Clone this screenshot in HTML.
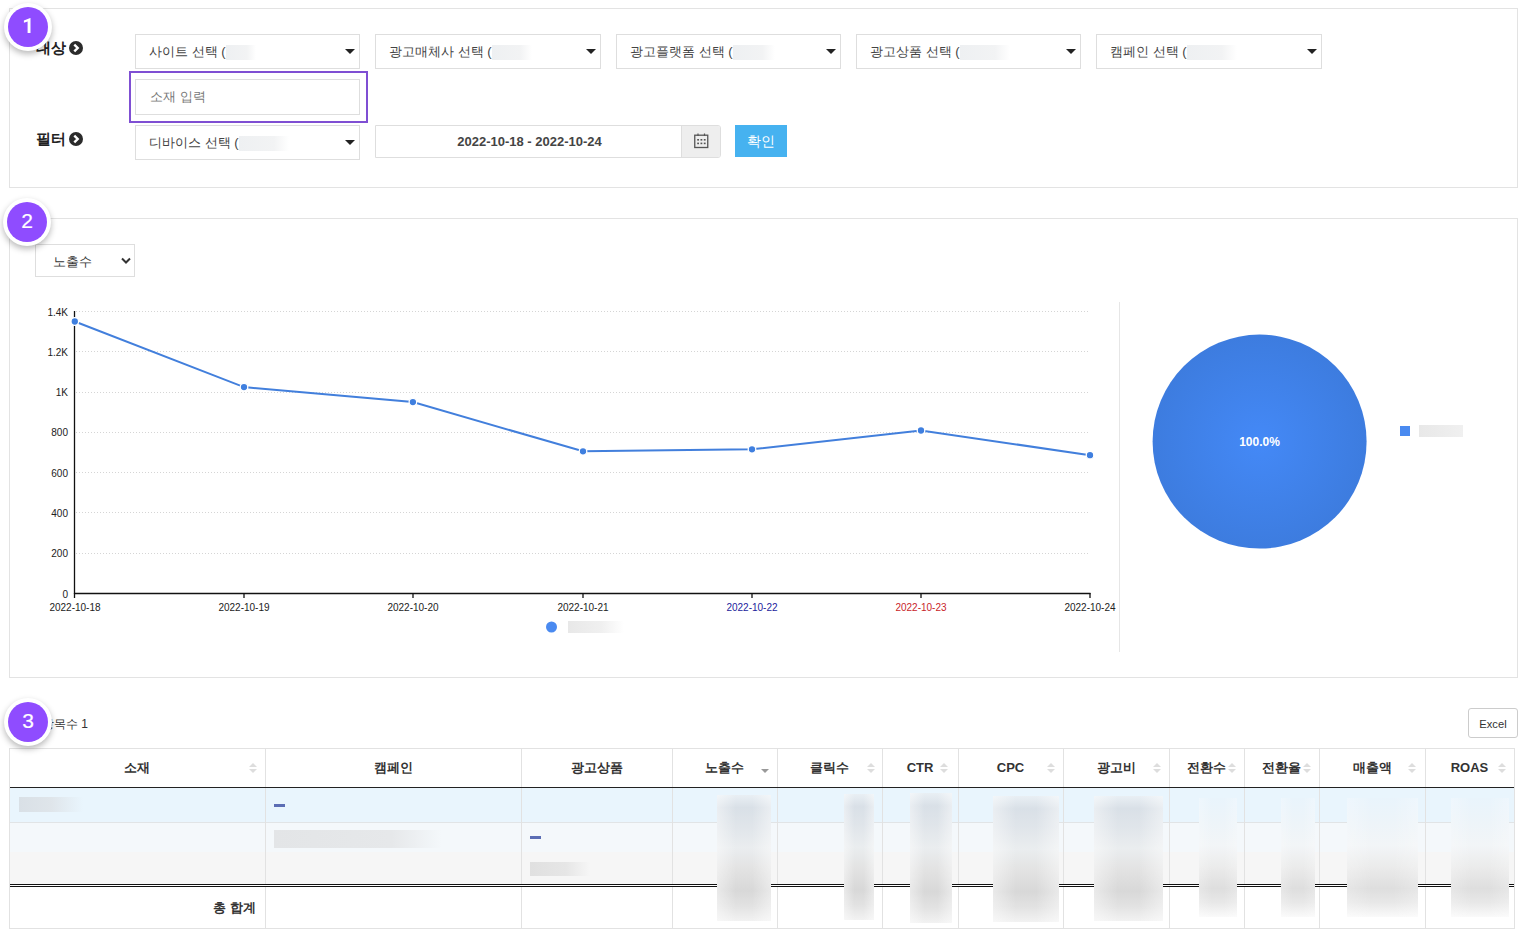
<!DOCTYPE html>
<html lang="ko">
<head>
<meta charset="utf-8">
<style>
*{box-sizing:border-box;margin:0;padding:0}
html,body{width:1523px;height:935px;overflow:hidden;background:#fff}
body{position:relative;font-family:"Liberation Sans",sans-serif;color:#333}
.abs{position:absolute}
.panel{position:absolute;border:1px solid #e3e3e3;background:#fff}
.badge{position:absolute;width:48px;height:48px;border-radius:50%;background:#fff;box-shadow:0 3px 6px rgba(0,0,0,.28);z-index:20}
.badge i{position:absolute;left:4px;top:4px;width:40px;height:40px;border-radius:50%;background:#8f4cff;color:#fff;font-style:normal;font-size:21px;line-height:37px;text-align:center;-webkit-text-stroke:0.2px #fff}
.lbl{position:absolute;font-size:15px;font-weight:bold;color:#222;line-height:16px}
.go{position:absolute;width:14px;height:14px;border-radius:50%;background:#2b2b2b}
.go svg{position:absolute;left:0;top:0}
.sel{position:absolute;height:35px;width:225px;border:1px solid #dedede;background:#fff;font-size:13px;color:#444;line-height:33px;padding-left:13px;white-space:nowrap;overflow:hidden}
.sel .tri{position:absolute;right:4px;top:14px;width:0;height:0;border-left:5px solid transparent;border-right:5px solid transparent;border-top:5px solid #222}
.blur{position:absolute}
.pt{display:inline-block;vertical-align:top;margin-top:10px;height:15px;background:linear-gradient(90deg,#eef0f2,#f2f3f4 70%,#fff)}
.th{position:absolute;top:749px;height:38px;line-height:38px;text-align:center;font-size:13px;font-weight:bold;color:#333;white-space:nowrap}
.sup{position:absolute;width:0;height:0;border-left:4px solid transparent;border-right:4px solid transparent;border-bottom:4px solid #ddd}
.sdn{position:absolute;width:0;height:0;border-left:4px solid transparent;border-right:4px solid transparent;border-top:4px solid #ddd}
.strip{position:absolute}
</style>
</head>
<body>

<!-- ============ PANEL 1 ============ -->
<div class="panel" style="left:9px;top:8px;width:1509px;height:180px"></div>
<div class="badge" style="left:4px;top:3px"><i><svg class="abs" style="left:0;top:0" width="40" height="40" viewBox="0 0 40 40"><path d="M19.6 25.9 L19.6 14.5 L15.9 15.8 L15.9 13.6 L22.2 10.9 L22.5 10.9 L22.5 25.9 Z" fill="#fff"/></svg></i></div>

<div class="lbl" style="left:36px;top:40px">대상</div>
<div class="go" style="left:69px;top:41px"><svg width="14" height="14" viewBox="0 0 14 14"><path d="M5.3 3.6 L8.7 7 L5.3 10.4" fill="none" stroke="#fff" stroke-width="2.4"/></svg></div>
<div class="lbl" style="left:36px;top:131px">필터</div>
<div class="go" style="left:69px;top:132px"><svg width="14" height="14" viewBox="0 0 14 14"><path d="M5.3 3.6 L8.7 7 L5.3 10.4" fill="none" stroke="#fff" stroke-width="2.4"/></svg></div>

<div class="sel" style="left:135px;top:34px">사이트 선택 (<span class="pt" style="width:30px"></span><span class="tri"></span></div>
<div class="sel" style="left:375px;top:34px;width:226px">광고매체사 선택 (<span class="pt" style="width:40px"></span><span class="tri"></span></div>
<div class="sel" style="left:616px;top:34px">광고플랫폼 선택 (<span class="pt" style="width:42px"></span><span class="tri"></span></div>
<div class="sel" style="left:856px;top:34px">광고상품 선택 (<span class="pt" style="width:50px"></span><span class="tri"></span></div>
<div class="sel" style="left:1096px;top:34px;width:226px">캠페인 선택 (<span class="pt" style="width:50px"></span><span class="tri"></span></div>

<div class="abs" style="left:129px;top:71px;width:239px;height:52px;border:2px solid #7f4fd3"></div>
<div class="abs" style="left:135px;top:79px;width:225px;height:36px;border:1px solid #dedede;font-size:13px;color:#777;line-height:34px;padding-left:14px">소재 입력</div>

<div class="sel" style="left:135px;top:125px">디바이스 선택 (<span class="pt" style="width:50px"></span><span class="tri"></span></div>
<div class="abs" style="left:375px;top:125px;width:346px;height:33px;border:1px solid #dedede;border-radius:0 3px 3px 0;overflow:hidden">
  <div class="abs" style="left:0;top:0;width:305px;height:31px;text-align:center;font-size:13px;font-weight:bold;color:#444;line-height:32px;padding-left:2px">2022-10-18 - 2022-10-24</div>
  <div class="abs" style="left:305px;top:0;width:40px;height:31px;background:#eee;border-left:1px solid #dedede"></div>
</div>
<svg class="abs" style="left:694px;top:133px" width="15" height="16" viewBox="0 0 15 16"><rect x="0.75" y="2.2" width="13" height="12.3" fill="none" stroke="#555" stroke-width="1.3"/><line x1="4" y1="0.5" x2="4" y2="3" stroke="#555" stroke-width="1.2"/><line x1="10.5" y1="0.5" x2="10.5" y2="3" stroke="#555" stroke-width="1.2"/><g fill="#555"><rect x="3.2" y="6" width="1.8" height="1.6"/><rect x="6.5" y="6" width="1.8" height="1.6"/><rect x="9.8" y="6" width="1.8" height="1.6"/><rect x="3.2" y="9.6" width="1.8" height="1.6"/><rect x="6.5" y="9.6" width="1.8" height="1.6"/><rect x="9.8" y="9.6" width="1.8" height="1.6"/></g></svg>
<div class="abs" style="left:735px;top:125px;width:52px;height:32px;background:#46b2f0;color:#fff;font-size:14px;text-align:center;line-height:32px">확인</div>

<!-- ============ PANEL 2 ============ -->
<div class="panel" style="left:9px;top:218px;width:1509px;height:460px"></div>
<div class="badge" style="left:3px;top:198px"><i>2</i></div>
<div class="abs" style="left:35px;top:244px;width:100px;height:33px;border:1px solid #dedede;font-size:13px;color:#333;line-height:33px;padding-left:17px">노출수
  <svg class="abs" style="left:85px;top:12px" width="10" height="8" viewBox="0 0 10 8"><path d="M1 1.5 L5 5.5 L9 1.5" fill="none" stroke="#333" stroke-width="2"/></svg>
</div>

<svg class="abs" style="left:0;top:0;z-index:5" width="1523" height="935" viewBox="0 0 1523 935">
  <g stroke="#d5d5d5" stroke-width="1" stroke-dasharray="1,2">
    <line x1="76" y1="311.5" x2="1090" y2="311.5"/>
    <line x1="76" y1="351.5" x2="1090" y2="351.5"/>
    <line x1="76" y1="392.5" x2="1090" y2="392.5"/>
    <line x1="76" y1="432.5" x2="1090" y2="432.5"/>
    <line x1="76" y1="472.5" x2="1090" y2="472.5"/>
    <line x1="76" y1="512.5" x2="1090" y2="512.5"/>
    <line x1="76" y1="553.5" x2="1090" y2="553.5"/>
  </g>
  <g stroke="#111" stroke-width="1.3" fill="none">
    <line x1="74.5" y1="311" x2="74.5" y2="594"/>
    <line x1="74" y1="593.5" x2="1090.5" y2="593.5"/>
    <line x1="74.5" y1="593" x2="74.5" y2="598"/>
    <line x1="244" y1="593" x2="244" y2="598"/>
    <line x1="413" y1="593" x2="413" y2="598"/>
    <line x1="583" y1="593" x2="583" y2="598"/>
    <line x1="752" y1="593" x2="752" y2="598"/>
    <line x1="921" y1="593" x2="921" y2="598"/>
    <line x1="1090" y1="593" x2="1090" y2="598"/>
  </g>
  <g font-family="Liberation Sans, sans-serif" font-size="10" fill="#222" text-anchor="end">
    <text x="68" y="316">1.4K</text>
    <text x="68" y="356">1.2K</text>
    <text x="68" y="396">1K</text>
    <text x="68" y="436">800</text>
    <text x="68" y="477">600</text>
    <text x="68" y="517">400</text>
    <text x="68" y="557">200</text>
    <text x="68" y="598">0</text>
  </g>
  <g font-family="Liberation Sans, sans-serif" font-size="10" fill="#222" text-anchor="middle">
    <text x="75" y="611">2022-10-18</text>
    <text x="244" y="611">2022-10-19</text>
    <text x="413" y="611">2022-10-20</text>
    <text x="583" y="611">2022-10-21</text>
    <text x="752" y="611" fill="#1c1c9c">2022-10-22</text>
    <text x="921" y="611" fill="#c8242a">2022-10-23</text>
    <text x="1090" y="611">2022-10-24</text>
  </g>
  <polyline points="74.8,321.5 244,387.1 412.9,402.1 583,451.3 752,449.3 921,430.5 1090,455.2" fill="none" stroke="#427fdc" stroke-width="2"/>
  <g fill="#3f7fdf" stroke="#fff" stroke-width="1.3">
    <circle cx="74.8" cy="321.5" r="3.8"/>
    <circle cx="244" cy="387.1" r="3.8"/>
    <circle cx="412.9" cy="402.1" r="3.8"/>
    <circle cx="583" cy="451.3" r="3.8"/>
    <circle cx="752" cy="449.3" r="3.8"/>
    <circle cx="921" cy="430.5" r="3.8"/>
    <circle cx="1090" cy="455.2" r="3.8"/>
  </g>
  <circle cx="551.5" cy="627" r="5.5" fill="#4a8af0"/>
  <line x1="1119.5" y1="302" x2="1119.5" y2="652" stroke="#e6e6e6" stroke-width="1"/>
  <defs>
    <radialGradient id="pg" cx="0.5" cy="0.5" r="0.5">
      <stop offset="0" stop-color="#4489f7"/>
      <stop offset="1" stop-color="#3d7cdf"/>
    </radialGradient>
  </defs>
  <circle cx="1259.6" cy="441.6" r="107" fill="url(#pg)"/>
  <text x="1259.5" y="446" font-family="Liberation Sans, sans-serif" font-size="12" font-weight="bold" fill="#fff" text-anchor="middle">100.0%</text>
  <rect x="1400" y="426" width="10" height="10" fill="#4a8af0"/>
</svg>
<div class="blur" style="left:568px;top:621px;width:56px;height:12px;background:linear-gradient(90deg,#e8e8e8,#f0f0f0 60%,#fff)"></div>
<div class="blur" style="left:1419px;top:425px;width:44px;height:12px;background:linear-gradient(90deg,#e8e8e8,#f0f0f0)"></div>

<!-- ============ TABLE ============ -->
<div class="badge" style="left:4px;top:698px"><i>3</i></div>
<div class="abs" style="right:1435px;top:717px;font-size:12px;color:#333;line-height:14px;white-space:nowrap">총 항목수 1</div>
<div class="abs" style="left:1468px;top:708px;width:50px;height:30px;border:1px solid #ccc;border-radius:3px;font-size:11.2px;color:#333;text-align:center;line-height:30px">Excel</div>

<div class="abs" style="left:9px;top:748px;width:1506px;height:181px;border:1px solid #e2e2e2;background:#fff"></div>
<div class="abs" style="left:10px;top:788px;width:1504px;height:34px;background:#e9f5fd"></div>
<div class="abs" style="left:10px;top:822px;width:1504px;height:1px;background:#e1e4e6"></div>
<div class="abs" style="left:10px;top:823px;width:1504px;height:29px;background:#f4f8fb"></div>
<div class="abs" style="left:10px;top:852px;width:1504px;height:32px;background:#f6f6f6"></div>
<div class="abs" style="left:265px;top:749px;width:1px;height:179px;background:#e2e2e2"></div>
<div class="abs" style="left:521px;top:749px;width:1px;height:179px;background:#e2e2e2"></div>
<div class="abs" style="left:672px;top:749px;width:1px;height:179px;background:#e2e2e2"></div>
<div class="abs" style="left:777px;top:749px;width:1px;height:179px;background:#e2e2e2"></div>
<div class="abs" style="left:882px;top:749px;width:1px;height:179px;background:#e2e2e2"></div>
<div class="abs" style="left:958px;top:749px;width:1px;height:179px;background:#e2e2e2"></div>
<div class="abs" style="left:1063px;top:749px;width:1px;height:179px;background:#e2e2e2"></div>
<div class="abs" style="left:1169px;top:749px;width:1px;height:179px;background:#e2e2e2"></div>
<div class="abs" style="left:1244px;top:749px;width:1px;height:179px;background:#e2e2e2"></div>
<div class="abs" style="left:1319px;top:749px;width:1px;height:179px;background:#e2e2e2"></div>
<div class="abs" style="left:1425px;top:749px;width:1px;height:179px;background:#e2e2e2"></div>
<div class="abs" style="left:10px;top:787px;width:1504px;height:1px;background:#222"></div>
<div class="abs" style="left:10px;top:884px;width:1504px;height:1px;background:#111"></div>
<div class="abs" style="left:10px;top:885px;width:1504px;height:1px;background:#fff"></div>
<div class="abs" style="left:10px;top:886px;width:1504px;height:1px;background:#111"></div>
<div class="th" style="left:9px;width:256px">소재</div>
<div class="sup" style="left:249px;top:763px"></div><div class="sdn" style="left:249px;top:769px"></div>
<div class="th" style="left:265px;width:256px">캠페인</div>
<div class="th" style="left:521px;width:151px">광고상품</div>
<div class="th" style="left:672px;width:105px">노출수</div>
<div class="sdn" style="left:761px;top:769px;border-top-color:#999"></div>
<div class="th" style="left:777px;width:105px">클릭수</div>
<div class="sup" style="left:867px;top:763px"></div><div class="sdn" style="left:867px;top:769px"></div>
<div class="th" style="left:882px;width:76px">CTR</div>
<div class="sup" style="left:940px;top:763px"></div><div class="sdn" style="left:940px;top:769px"></div>
<div class="th" style="left:958px;width:105px">CPC</div>
<div class="sup" style="left:1047px;top:763px"></div><div class="sdn" style="left:1047px;top:769px"></div>
<div class="th" style="left:1063px;width:106px">광고비</div>
<div class="sup" style="left:1153px;top:763px"></div><div class="sdn" style="left:1153px;top:769px"></div>
<div class="th" style="left:1169px;width:75px">전환수</div>
<div class="sup" style="left:1228px;top:763px"></div><div class="sdn" style="left:1228px;top:769px"></div>
<div class="th" style="left:1244px;width:75px">전환율</div>
<div class="sup" style="left:1303px;top:763px"></div><div class="sdn" style="left:1303px;top:769px"></div>
<div class="th" style="left:1319px;width:106px">매출액</div>
<div class="sup" style="left:1408px;top:763px"></div><div class="sdn" style="left:1408px;top:769px"></div>
<div class="th" style="left:1425px;width:89px">ROAS</div>
<div class="sup" style="left:1498px;top:763px"></div><div class="sdn" style="left:1498px;top:769px"></div>
<div class="strip" style="left:717px;top:795px;width:54px;height:126px;background:linear-gradient(90deg,rgba(255,255,255,.45),rgba(255,255,255,0) 35%,rgba(255,255,255,0) 65%,rgba(255,255,255,.45)),linear-gradient(180deg,#e9eff4 0%,#d9e0e7 10%,#e0e5ea 25%,#eaedef 42%,#e3e3e3 58%,#d8d8d8 76%,#e2e2e2 88%,#f2f2f2 100%)"></div>
<div class="strip" style="left:844px;top:794px;width:30px;height:126px;background:linear-gradient(90deg,rgba(255,255,255,.45),rgba(255,255,255,0) 35%,rgba(255,255,255,0) 65%,rgba(255,255,255,.45)),linear-gradient(180deg,#e9eff4 0%,#d9e0e7 10%,#e0e5ea 25%,#eaedef 42%,#e3e3e3 58%,#d8d8d8 76%,#e2e2e2 88%,#f2f2f2 100%)"></div>
<div class="strip" style="left:910px;top:793px;width:42px;height:130px;background:linear-gradient(90deg,rgba(255,255,255,.45),rgba(255,255,255,0) 35%,rgba(255,255,255,0) 65%,rgba(255,255,255,.45)),linear-gradient(180deg,#e9eff4 0%,#d9e0e7 10%,#e0e5ea 25%,#eaedef 42%,#e3e3e3 58%,#d8d8d8 76%,#e2e2e2 88%,#f2f2f2 100%)"></div>
<div class="strip" style="left:993px;top:796px;width:66px;height:126px;background:linear-gradient(90deg,rgba(255,255,255,.45),rgba(255,255,255,0) 35%,rgba(255,255,255,0) 65%,rgba(255,255,255,.45)),linear-gradient(180deg,#e9eff4 0%,#d9e0e7 10%,#e0e5ea 25%,#eaedef 42%,#e3e3e3 58%,#d8d8d8 76%,#e2e2e2 88%,#f2f2f2 100%)"></div>
<div class="strip" style="left:1094px;top:796px;width:69px;height:125px;background:linear-gradient(90deg,rgba(255,255,255,.45),rgba(255,255,255,0) 35%,rgba(255,255,255,0) 65%,rgba(255,255,255,.45)),linear-gradient(180deg,#e9eff4 0%,#d9e0e7 10%,#e0e5ea 25%,#eaedef 42%,#e3e3e3 58%,#d8d8d8 76%,#e2e2e2 88%,#f2f2f2 100%)"></div>
<div class="strip" style="left:1199px;top:798px;width:38px;height:119px;background:linear-gradient(90deg,rgba(255,255,255,.25),rgba(255,255,255,0) 35%,rgba(255,255,255,0) 65%,rgba(255,255,255,.25)),linear-gradient(180deg,#e9f4fc 0%,#edf4f9 20%,#f2f5f7 40%,#ebebeb 58%,#dedede 76%,#e8e8e8 88%,#fafafa 100%)"></div>
<div class="strip" style="left:1281px;top:798px;width:34px;height:119px;background:linear-gradient(90deg,rgba(255,255,255,.25),rgba(255,255,255,0) 35%,rgba(255,255,255,0) 65%,rgba(255,255,255,.25)),linear-gradient(180deg,#e9f4fc 0%,#edf4f9 20%,#f2f5f7 40%,#ebebeb 58%,#dedede 76%,#e8e8e8 88%,#fafafa 100%)"></div>
<div class="strip" style="left:1347px;top:798px;width:71px;height:119px;background:linear-gradient(90deg,rgba(255,255,255,.25),rgba(255,255,255,0) 35%,rgba(255,255,255,0) 65%,rgba(255,255,255,.25)),linear-gradient(180deg,#e9f4fc 0%,#edf4f9 20%,#f2f5f7 40%,#ebebeb 58%,#dedede 76%,#e8e8e8 88%,#fafafa 100%)"></div>
<div class="strip" style="left:1451px;top:798px;width:58px;height:119px;background:linear-gradient(90deg,rgba(255,255,255,.25),rgba(255,255,255,0) 35%,rgba(255,255,255,0) 65%,rgba(255,255,255,.25)),linear-gradient(180deg,#e9f4fc 0%,#edf4f9 20%,#f2f5f7 40%,#ebebeb 58%,#dedede 76%,#e8e8e8 88%,#fafafa 100%)"></div>
<div class="abs" style="left:274px;top:804px;width:11px;height:3px;background:#5b6db4"></div>
<div class="abs" style="left:530px;top:836px;width:11px;height:3px;background:#5b6db4"></div>
<div class="blur" style="left:19px;top:797px;width:64px;height:15px;background:linear-gradient(90deg,#d9e0e6,#dfe5ea 50%,#e9f5fd)"></div>
<div class="blur" style="left:274px;top:830px;width:168px;height:18px;background:linear-gradient(90deg,#e3e5e7,#e6e8ea 70%,#f4f8fb)"></div>
<div class="blur" style="left:530px;top:862px;width:60px;height:14px;background:linear-gradient(90deg,#e0e0e0,#e6e6e6 60%,#f6f6f6)"></div>
<div class="abs" style="left:9px;top:888px;width:247px;height:40px;line-height:40px;text-align:right;font-size:13px;font-weight:bold;color:#333">총 합계</div>


</body>
</html>
